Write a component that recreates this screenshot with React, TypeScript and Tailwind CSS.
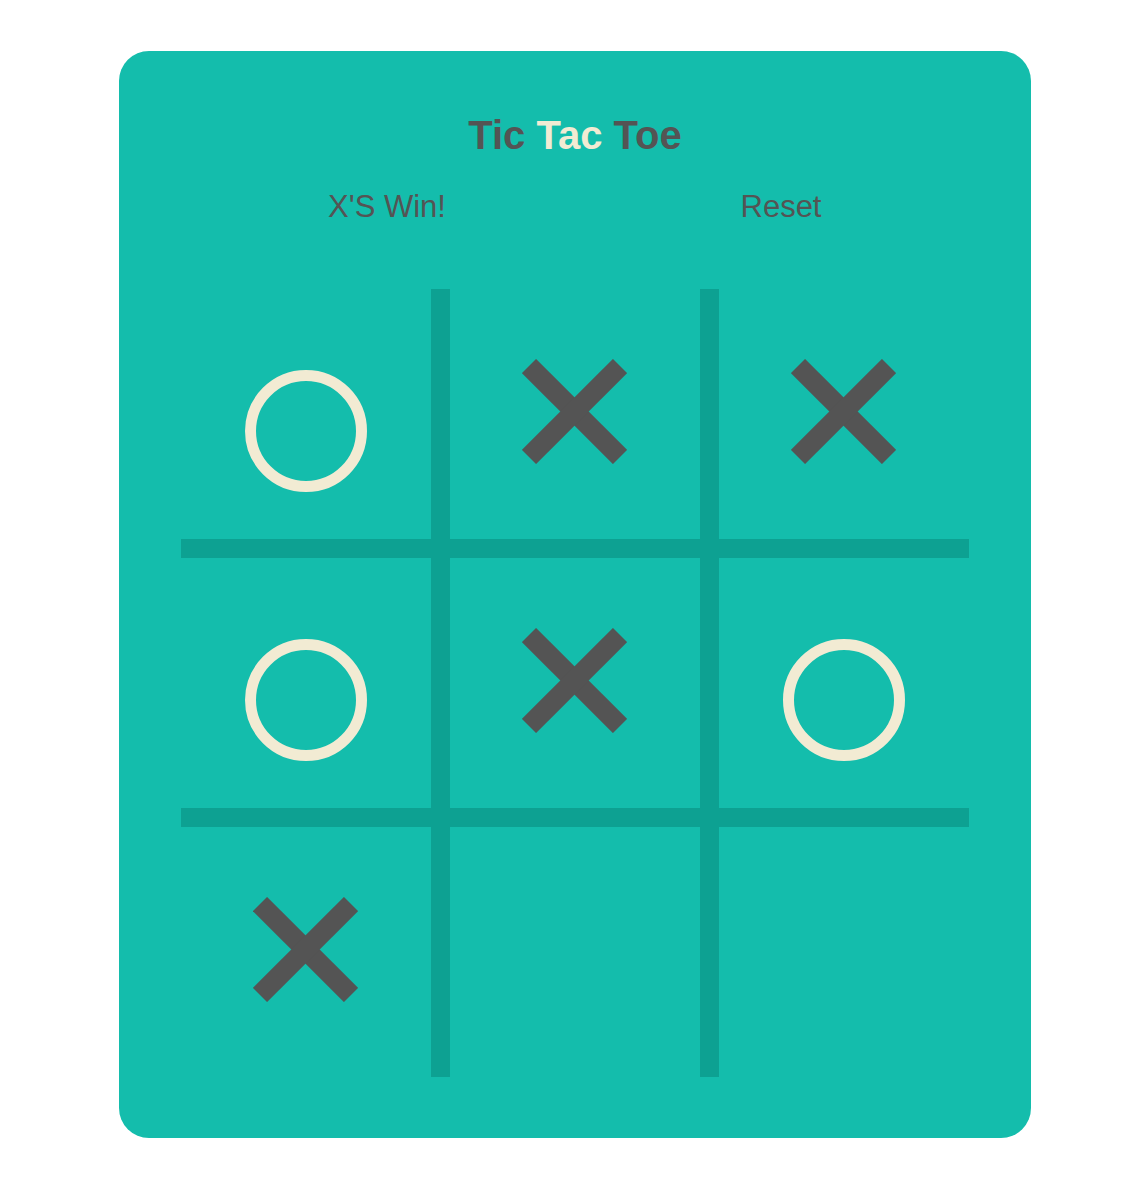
type Mark = "X" | "O" | ""

const board: Mark[] = ["O", "X", "X", "O", "X", "O", "X", "", ""]

const Cross = () => (
    <svg width="105" height="105" viewBox="0 0 105 105" className="mb-[6px] mr-[2px]">
        <line x1="7" y1="7" x2="98" y2="98" stroke="#545454" strokeWidth="20" />
        <line x1="98" y1="7" x2="7" y2="98" stroke="#545454" strokeWidth="20" />
    </svg>
)

const Nought = () => (
    <svg width="122" height="122" viewBox="0 0 122 122" className="mt-[34px]">
        <circle cx="61" cy="61" r="55.5" fill="none" stroke="#f2ebd3" strokeWidth="11" />
    </svg>
)

const App = () => {
    return (
        <div className="min-h-screen bg-white pt-[51px] font-['Liberation_Sans',Arial,sans-serif]">
            <div className="ml-[119px] w-[912px] rounded-[30px] bg-[#14bdac] pt-[64px] pb-[61px]">

                <h1 className="text-center text-[40px] font-bold leading-[40px] text-[#545454]">
                    Tic <span className="text-[#f2ebd3]">Tac</span> Toe
                </h1>

                {/* status + reset */}
                <div className="mt-[36px] ml-[71px] flex w-[788px] text-[31px] leading-[31px] text-[#545454]">
                    <div className="flex-1 text-center">X'S Win!</div>
                    <button className="flex-1 text-center">Reset</button>
                </div>

                {/* board */}
                <div className="mt-[67px] ml-[62px] grid w-[788px] grid-cols-[250px_250px_250px] gap-[19px] bg-[#0da192]">
                    {board.map((m, i) => (
                        <div key={i} className="flex h-[250px] items-center justify-center bg-[#14bdac]">
                            {m === "X" && <Cross />}
                            {m === "O" && <Nought />}
                        </div>
                    ))}
                </div>

            </div>
        </div>
    )
}

export default App
